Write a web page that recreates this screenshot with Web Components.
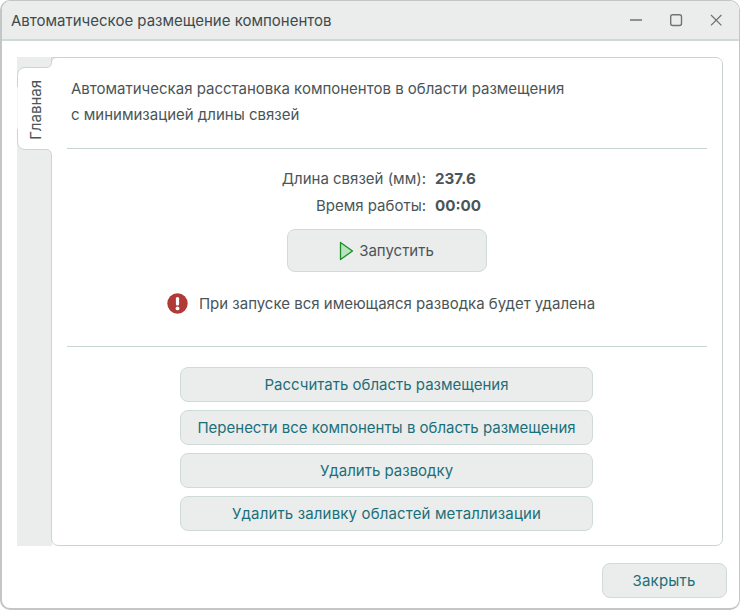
<!doctype html>
<html>
<head>
<meta charset="utf-8">
<style>
html,body{margin:0;padding:0;background:#fff}
body{font-family:Inter,"Liberation Sans",sans-serif;font-size:15px;color:#4a5557}
</style>
</head>
<body>
<template id="win-tpl">
<style>
:host{display:flex;flex-direction:column;box-sizing:border-box;width:740px;height:610px;background:#fff;border:1px solid #c2c6c6;border-width:1px 1px 2px 2px;border-radius:10px;overflow:hidden}
.title{display:flex;align-items:center;height:38px;flex:none;background:#ebedec;border-bottom:2px solid #d0d8d8;padding-left:9px;color:#3f4a4c}
.title span{flex:1}
.ctl{display:flex;align-items:center;justify-content:center;width:40px;height:38px}
.ctls{display:flex;margin-right:3px}
.main{flex:1;display:flex;flex-direction:column;padding:16px 16px 10px 15px;min-height:0}
.foot{display:flex;justify-content:flex-end;padding-top:17px;flex:none}
.stack{flex:1;min-height:0;display:flex}
</style>
<div class="title"><span><slot name="title"></slot></span>
<div class="ctls">
<div class="ctl"><svg width="16" height="16" viewBox="0 0 16 16"><path d="M2 8h12" stroke="#6d7576" stroke-width="1.4"/></svg></div>
<div class="ctl"><svg width="16" height="16" viewBox="0 0 16 16"><rect x="2.7" y="2.7" width="10.8" height="10.8" rx="2" fill="none" stroke="#6d7576" stroke-width="1.4"/></svg></div>
<div class="ctl"><svg width="16" height="16" viewBox="0 0 16 16"><path d="M3 3l10.4 10.4M13.4 3L3 13.4" stroke="#6d7576" stroke-width="1.3" fill="none"/></svg></div>
</div>
</div>
<div class="main"><div class="stack"><slot></slot></div><div class="foot"><slot name="foot"></slot></div></div>
</template>

<template id="tabs-tpl">
<style>
:host{display:flex;flex:1;min-width:0;background:linear-gradient(#ebedec,#ebedec) left/35px 100% no-repeat}
.rail{position:relative;z-index:1;width:34px;flex:none;padding-top:10px;box-sizing:border-box}
.shape{position:absolute;left:0;top:0}
.tab{position:relative;box-sizing:border-box;width:35px;height:83px;padding:2px 0 0 2px;display:flex;align-items:center;justify-content:center}
.tab span{writing-mode:vertical-rl;transform:rotate(180deg);font-size:15px;color:#4a5557}
.pane{flex:1;min-width:0;background:#fff;border:1px solid #c9d5d3;border-radius:0 7px 7px 7px;box-sizing:border-box;padding:0 15px 14px 15px;display:flex;flex-direction:column}
</style>
<div class="rail">
<svg class="shape" width="42" height="100" viewBox="0 0 42 100">
<path d="M.5 18.5Q.5 10.5 8.5 10.5H29Q34.5 10.5 34.5 5.5Q34.5 .5 40 .5H42V99H34.5Q34.5 92.5 29 92.5H8.5Q.5 92.5 .5 84.5Z" fill="#fff"/>
<path d="M.5 30V18.5Q.5 10.5 8.5 10.5H29Q34.5 10.5 34.5 5.5Q34.5 .5 40 .5H42M.5 72V84.5Q.5 92.5 8.5 92.5H29Q34.5 92.5 34.5 99" fill="none" stroke="#c9d5d3"/>
</svg>
<div class="tab"><span><slot name="tab"></slot></span></div></div>
<div class="pane"><slot></slot></div>
</template>

<template id="btn-tpl">
<style>
:host{display:flex;align-items:center;justify-content:center;gap:5px;box-sizing:border-box;height:35px;background:#ebedec;border:1px solid #cfdbd9;border-radius:8px;color:#1b6f7a;white-space:nowrap}
</style>
<slot name="icon"></slot><slot></slot>
</template>

<template id="stat-tpl">
<style>
:host{display:grid;grid-template-columns:359px 1fr;column-gap:9px;height:27px;align-items:center}
.k{text-align:right}
.v{font-weight:700;font-size:15.2px;color:#4a5557}
</style>
<div class="k"><slot name="k"></slot></div><div class="v"><slot name="v"></slot></div>
</template>

<template id="rule-tpl">
<style>:host{display:block;height:1px;background:#c9d5d3;flex:none}</style>
</template>

<script>
function reg(name, id) {
    customElements.define(name, class extends HTMLElement {
        connectedCallback() {
            if (this.shadowRoot) return;
            this.attachShadow({ mode: "open" }).append(document.getElementById(id).content.cloneNode(true));
        }
    });
}
reg("app-window", "win-tpl");
reg("side-tabs", "tabs-tpl");
reg("app-button", "btn-tpl");
reg("stat-row", "stat-tpl");
reg("h-rule", "rule-tpl");
</script>

<app-window>
  <span slot="title">Автоматическое размещение компонентов</span>
  <side-tabs>
    <span slot="tab">Главная</span>
    <div style="padding:18px 0 0 4px;line-height:26px;height:90px;flex:none;box-sizing:border-box">Автоматическая расстановка компонентов в области размещения<br>с минимизацией длины связей</div>
    <h-rule></h-rule>
    <div style="display:flex;flex-direction:column;margin-top:16px;width:100%">
      <stat-row><span slot="k">Длина связей (мм):</span><span slot="v">237.6</span></stat-row>
      <stat-row><span slot="k">Время работы:</span><span slot="v">00:00</span></stat-row>
    </div>
    <app-button style="width:200px;height:43px;margin:10px auto 0;color:#4a5557;padding-right:2px">
      <svg slot="icon" width="16" height="20" viewBox="0 0 16 20"><path d="M2.5 1.5L14.5 10 2.5 18.5z" fill="#b9e3bd" stroke="#1a8f2a" stroke-width="1.3" stroke-linejoin="round"/></svg>
      Запустить
    </app-button>
    <div style="display:flex;align-items:center;justify-content:center;gap:11px;margin-top:20px;height:22px;padding-right:12px">
      <svg width="21" height="21" viewBox="0 0 21 21"><circle cx="10.5" cy="10.5" r="10.2" fill="#b23a36"/><rect x="8.9" y="4" width="3.2" height="8.6" rx="1.5" fill="#fff"/><circle cx="10.5" cy="15.4" r="1.9" fill="#fff"/></svg>
      <span>При запуске вся имеющаяся разводка будет удалена</span>
    </div>
    <h-rule style="margin-top:32px"></h-rule>
    <div style="display:flex;flex-direction:column;gap:8px;margin:20px 114px 0 113px">
      <app-button>Рассчитать область размещения</app-button>
      <app-button>Перенести все компоненты в область размещения</app-button>
      <app-button>Удалить разводку</app-button>
      <app-button style="letter-spacing:.15px">Удалить заливку областей металлизации</app-button>
    </div>
  </side-tabs>
  <app-button slot="foot" style="width:125px;margin-right:-4px;letter-spacing:.2px;padding-right:1px">Закрыть</app-button>
</app-window>
</body>
</html>
